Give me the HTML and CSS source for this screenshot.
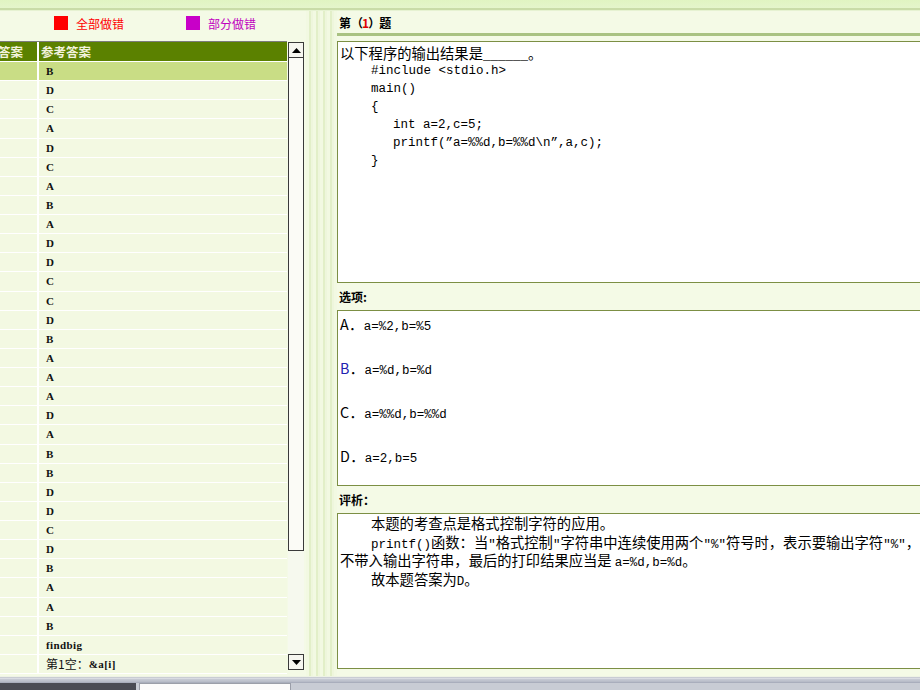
FILE: index.html
```html
<!DOCTYPE html>
<html lang="zh-CN">
<head>
<meta charset="utf-8">
<title>试题答案</title>
<link rel="stylesheet" href="styles.css">
</head>
<body>
<div class="topbar"></div>
<div class="main">
  <div class="left">
    <div class="legend">
      <span class="legend-item wrong"><i class="sq"></i>全部做错</span>
      <span class="legend-item part"><i class="sq"></i>部分做错</span>
    </div>
    <div class="grid">
      <div class="table">
        <div class="row head"><div class="c1"><span>我的答案</span></div><div class="c2">参考答案</div></div>
        <div class="row sel"><div class="c1"></div><div class="c2">B</div></div>
        <div class="row"><div class="c1"></div><div class="c2">D</div></div>
        <div class="row"><div class="c1"></div><div class="c2">C</div></div>
        <div class="row"><div class="c1"></div><div class="c2">A</div></div>
        <div class="row"><div class="c1"></div><div class="c2">D</div></div>
        <div class="row"><div class="c1"></div><div class="c2">C</div></div>
        <div class="row"><div class="c1"></div><div class="c2">A</div></div>
        <div class="row"><div class="c1"></div><div class="c2">B</div></div>
        <div class="row"><div class="c1"></div><div class="c2">A</div></div>
        <div class="row"><div class="c1"></div><div class="c2">D</div></div>
        <div class="row"><div class="c1"></div><div class="c2">D</div></div>
        <div class="row"><div class="c1"></div><div class="c2">C</div></div>
        <div class="row"><div class="c1"></div><div class="c2">C</div></div>
        <div class="row"><div class="c1"></div><div class="c2">D</div></div>
        <div class="row"><div class="c1"></div><div class="c2">B</div></div>
        <div class="row"><div class="c1"></div><div class="c2">A</div></div>
        <div class="row"><div class="c1"></div><div class="c2">A</div></div>
        <div class="row"><div class="c1"></div><div class="c2">A</div></div>
        <div class="row"><div class="c1"></div><div class="c2">D</div></div>
        <div class="row"><div class="c1"></div><div class="c2">A</div></div>
        <div class="row"><div class="c1"></div><div class="c2">B</div></div>
        <div class="row"><div class="c1"></div><div class="c2">B</div></div>
        <div class="row"><div class="c1"></div><div class="c2">D</div></div>
        <div class="row"><div class="c1"></div><div class="c2">D</div></div>
        <div class="row"><div class="c1"></div><div class="c2">C</div></div>
        <div class="row"><div class="c1"></div><div class="c2">D</div></div>
        <div class="row"><div class="c1"></div><div class="c2">B</div></div>
        <div class="row"><div class="c1"></div><div class="c2">A</div></div>
        <div class="row"><div class="c1"></div><div class="c2">A</div></div>
        <div class="row"><div class="c1"></div><div class="c2">B</div></div>
        <div class="row"><div class="c1"></div><div class="c2">findbig</div></div>
        <div class="row"><div class="c1"></div><div class="c2"><span class="cjk">第1空：</span>&amp;a[i]</div></div>
      </div>
      <div class="scrollbar">
        <div class="sbtn"><svg width="9" height="5" viewBox="0 0 9 5"><path d="M0 5 L4.5 0 L9 5 Z" fill="#000"/></svg></div>
        <div class="thumb"></div>
        <div class="track"></div>
        <div class="sbtn"><svg width="9" height="5" viewBox="0 0 9 5"><path d="M0 0 L9 0 L4.5 5 Z" fill="#000"/></svg></div>
      </div>
    </div>
  </div>
  <div class="divider"></div>
  <div class="right">
    <div class="title">第<b class="num">（<em>1</em>）</b>题</div>
    <div class="rule"></div>
    <div class="box qbox">
      <div class="line">以下程序的输出结果是<span class="mono">______</span>。</div>
      <div class="line mono i4">#include &lt;stdio.h&gt;</div>
      <div class="line mono i4">main()</div>
      <div class="line mono i4">{</div>
      <div class="line mono i7">int a=2,c=5;</div>
      <div class="line mono i7">printf(”a=%%d,b=%%d\n”,a,c);</div>
      <div class="line mono i4">}</div>
    </div>
    <div class="label">选项:</div>
    <div class="box obox">
      <div class="opt">A<span class="dot">．</span><span class="mono">a=%2,b=%5</span></div>
      <div class="opt"><span class="blue">B</span><span class="dot">．</span><span class="mono">a=%d,b=%d</span></div>
      <div class="opt">C<span class="dot">．</span><span class="mono">a=%%d,b=%%d</span></div>
      <div class="opt">D<span class="dot">．</span><span class="mono">a=2,b=5</span></div>
    </div>
    <div class="label">评析：</div>
    <div class="box abox">
      <div class="line i4">本题的考查点是格式控制字符的应用。</div>
      <div class="line i4"><span class="mono">printf()</span>函数：当<span class="mono">"</span>格式控制<span class="mono">"</span>字符串中连续使用两个<span class="mono">"%"</span>符号时，表示要输出字符<span class="mono">"%"</span>，</div>
      <div class="line">不带入输出字符串，最后的打印结果应当是 <span class="mono">a=%d,b=%d</span>。</div>
      <div class="line i4">故本题答案为<span class="mono">D</span>。</div>
    </div>
  </div>
</div>
<div class="footer">
  <div class="stripes"></div>
  <div class="tabs">
    <div class="tab dark"></div>
    <div class="tab light"></div>
    <div class="tab rest"></div>
  </div>
</div>
</body>
</html>
```

FILE: styles.css
```css
* { box-sizing: border-box; }
html, body { margin: 0; padding: 0; }
body {
  width: 920px;
  height: 690px;
  overflow: hidden;
  display: flex;
  flex-direction: column;
  background: #f4fae6;
  font-family: "Noto Sans CJK SC", sans-serif;
  color: #000;
}
.topbar {
  height: 11px;
  flex: none;
  background: linear-gradient(#e0f4c2 0, #e4f5cb 8px, #c9dca8 8px, #c9dca8 10px, #e6f2d2 10px);
}
.main {
  flex: 1;
  display: flex;
  min-height: 0;
}
.left {
  width: 306px;
  flex: none;
  display: flex;
  flex-direction: column;
}
.legend {
  height: 30px;
  flex: none;
  display: flex;
  align-items: center;
  font-size: 12px;
  padding-left: 54px;
  padding-bottom: 6px;
  gap: 62px;
}
.legend-item { display: flex; align-items: center; gap: 8px; }
.sq { display: block; width: 14px; height: 14px; }
.wrong { color: #ff0000; }
.wrong .sq { background: #ff0000; }
.part { color: #c000c0; }
.part .sq { background: #c800c8; }
.grid {
  flex: 1;
  display: flex;
  min-height: 0;
}
.table {
  width: 287px;
  flex: none;
  border-top: 1px solid #7c7c7c;
  overflow: hidden;
}
.row {
  display: flex;
  height: 19.13px;
  border-bottom: 1px solid #ffffff;
  background: #f3f9e2;
  font-family: "Liberation Serif", serif;
  font-size: 11px;
  font-weight: bold;
  color: #111;
}
.row .c1 {
  width: 39px;
  flex: none;
  border-right: 2px solid #ffffff;
}
.row .c2 {
  flex: 1;
  padding-left: 7px;
  display: flex;
  align-items: center;
  white-space: nowrap;
  letter-spacing: 0.4px;
}
.row .cjk { font-family: "Noto Sans CJK SC", sans-serif; font-weight: normal; font-size: 12px; letter-spacing: 0; }
.row.head {
  background: #5b8100;
  color: #f2f2dc;
  font-family: "Noto Sans CJK SC", sans-serif;
  font-size: 12.5px;
  font-weight: bold;
  height: 20px;
}
.row.head .c1 {
  display: flex;
  justify-content: flex-end;
  align-items: center;
  overflow: hidden;
  white-space: nowrap;
  padding-right: 14px;
}
.row.head .c2 { padding-left: 2px; letter-spacing: 0; }
.row.sel { background: #c9dd85; }
.scrollbar {
  width: 18px;
  flex: none;
  display: flex;
  flex-direction: column;
  padding: 1px 1px 6px 1px;
}
.sbtn {
  height: 16px;
  flex: none;
  border: 1px solid #3a3a3a;
  background: #f6f6f0;
  display: flex;
  align-items: center;
  justify-content: center;
}
.thumb {
  height: 493px;
  flex: none;
  border: 1px solid #3a3a3a;
  border-top: none;
  background: #fbfbf6;
}
.track { flex: 1; background: #f6f9ee; }
.divider {
  width: 31px;
  flex: none;
  background: repeating-linear-gradient(90deg, #f2f9e2 0, #f2f9e2 3px, #e2efc8 3px, #e2efc8 5px, #eef6dc 5px, #eef6dc 7px);
}
.right {
  flex: 1;
  min-width: 0;
  overflow: hidden;
  display: flex;
  flex-direction: column;
}
.title {
  height: 22px;
  flex: none;
  padding-left: 2px;
  font-size: 12px;
  font-weight: bold;
  display: flex;
  align-items: center;
  white-space: nowrap;
}
.title .num { font-weight: bold; letter-spacing: -1px; }
.title em { font-style: normal; color: #e00000; }
.rule {
  height: 3px;
  flex: none;
  width: 600px;
  background: #a9c282;
  margin-bottom: 5px;
}
.box {
  width: 600px;
  flex: none;
  background: #ffffff;
  border: 1px solid #7c8f44;
  font-size: 14.3px;
  line-height: 18px;
  padding: 2px 2px;
  white-space: nowrap;
  overflow: hidden;
}
.qbox { height: 242px; }
.obox { height: 176px; padding-top: 4px; }
.abox { height: 156px; padding-top: 0; line-height: 18.5px; }
.line { height: 18px; }
.abox .line { height: 18.5px; }
.mono { font-family: "Liberation Mono", monospace; font-size: 12.5px; }
.i4 { padding-left: 31px; }
.i7 { padding-left: 53px; }
.label {
  height: 27px;
  flex: none;
  display: flex;
  align-items: center;
  padding-left: 2px;
  font-size: 12px;
  font-weight: bold;
}
.opt { height: 44px; }
.dot { display: inline-block; width: 15px; text-align: center; }
.blue { color: #2020b0; }
.footer {
  height: 14px;
  flex: none;
  display: flex;
  flex-direction: column;
}
.stripes {
  height: 7px;
  background: linear-gradient(#eef3e4 0, #eef3e4 1px, #c0c4cc 1px, #e2e4ea 3px, #a8aebc 4px, #d6d9e0 5px, #9aa0b0 6px, #b8bcc8 7px);
}
.tabs { flex: 1; display: flex; }
.tab.dark { width: 139px; background: #4a4c54; border-right: 3px solid #c8ccd4; }
.tab.light { width: 152px; background: #fbfbfb; border: 1px solid #9a9ea8; border-bottom: none; }
.tab.rest { flex: 1; background: #c8ccd4; }
```
